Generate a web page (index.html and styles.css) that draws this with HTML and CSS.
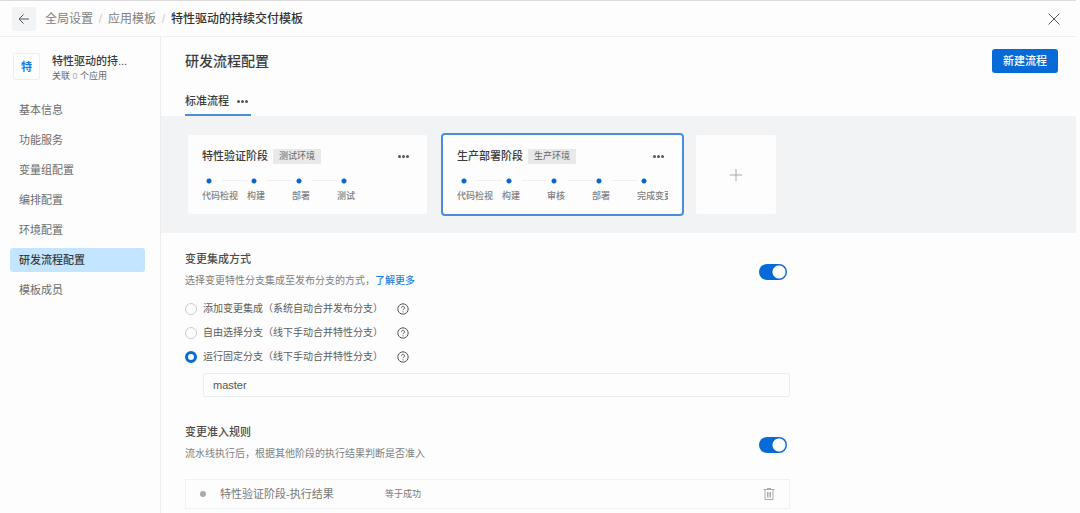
FILE: index.html
```html
<!DOCTYPE html>
<html lang="zh-CN">
<head>
<meta charset="utf-8">
<meta name="viewport" content="width=device-width, initial-scale=1">
<title>研发流程配置</title>
<link rel="stylesheet" href="styles.css">
</head>
<body>
<div class="app">
  <header class="topbar">
    <button class="back" aria-label="返回">
      <svg width="12" height="12" viewBox="0 0 12 12"><path d="M11 6H1.500M5.500 1.500L1 6l4.500 4.500"/></svg>
    </button>
    <nav class="crumbs">
      <a href="#">全局设置</a><span class="slash">/</span><a href="#">应用模板</a><span class="slash">/</span><strong>特性驱动的持续交付模板</strong>
    </nav>
    <button class="close" aria-label="关闭">
      <svg width="14" height="14" viewBox="0 0 14 14"><path d="M1.500 1.500l11 11M12.500 1.500l-11 11"/></svg>
    </button>
  </header>
  <div class="body">
    <aside class="sidebar">
      <div class="template">
        <span class="logo">特</span>
        <div class="template-text">
          <div class="template-name">特性驱动的持...</div>
          <div class="template-sub">关联 <span class="count">0</span> 个应用</div>
        </div>
      </div>
      <nav class="menu">
        <a href="#">基本信息</a>
        <a href="#">功能服务</a>
        <a href="#">变量组配置</a>
        <a href="#">编排配置</a>
        <a href="#">环境配置</a>
        <a href="#" class="active" aria-current="page">研发流程配置</a>
        <a href="#">模板成员</a>
      </nav>
    </aside>
    <main class="main">
      <div class="heading">
        <h1>研发流程配置</h1>
        <button class="primary">新建流程</button>
      </div>
      <div class="tabs">
        <div class="tab">
          <a href="#">标准流程</a>
          <button class="more" aria-label="更多"><i></i><i></i><i></i></button>
        </div>
      </div>
      <section class="stages">
        <article class="card">
          <div class="card-head">
            <h2>特性验证阶段</h2><span class="tag">测试环境</span>
            <button class="more" aria-label="更多"><i></i><i></i><i></i></button>
          </div>
          <ol class="steps">
            <li>代码检视</li><li>构建</li><li>部署</li><li>测试</li>
          </ol>
        </article>
        <article class="card selected">
          <div class="card-head">
            <h2>生产部署阶段</h2><span class="tag">生产环境</span>
            <button class="more" aria-label="更多"><i></i><i></i><i></i></button>
          </div>
          <ol class="steps">
            <li>代码检视</li><li>构建</li><li>审核</li><li>部署</li><li>完成变更</li>
          </ol>
        </article>
        <button class="add" aria-label="添加阶段">
          <svg width="12" height="12" viewBox="0 0 12 12"><path d="M6 0v12M0 6h12"/></svg>
        </button>
      </section>
      <div class="settings">
        <section>
          <div class="setting-head">
            <div>
              <h3>变更集成方式</h3>
              <p>选择变更特性分支集成至发布分支的方式，<a href="#">了解更多</a></p>
            </div>
            <input class="switch" type="checkbox" role="switch" aria-label="变更集成方式" checked>
          </div>
          <div class="options">
            <div class="option">
              <input type="radio" name="mode" id="mode-add"><label for="mode-add">添加变更集成（系统自动合并发布分支）</label>
              <svg class="help" width="12" height="12" viewBox="0 0 12 12"><circle cx="6" cy="6" r="5.200"/><path d="M4.500 4.800a1.500 1.500 0 1 1 2.300 1.250Q6 6.500 6 7.200M6 8.300v1"/></svg>
            </div>
            <div class="option">
              <input type="radio" name="mode" id="mode-free"><label for="mode-free">自由选择分支（线下手动合并特性分支）</label>
              <svg class="help" width="12" height="12" viewBox="0 0 12 12"><circle cx="6" cy="6" r="5.200"/><path d="M4.500 4.800a1.500 1.500 0 1 1 2.300 1.250Q6 6.500 6 7.200M6 8.300v1"/></svg>
            </div>
            <div class="option">
              <input type="radio" name="mode" id="mode-fixed" checked><label for="mode-fixed">运行固定分支（线下手动合并特性分支）</label>
              <svg class="help" width="12" height="12" viewBox="0 0 12 12"><circle cx="6" cy="6" r="5.200"/><path d="M4.500 4.800a1.500 1.500 0 1 1 2.300 1.250Q6 6.500 6 7.200M6 8.300v1"/></svg>
            </div>
            <input class="branch" type="text" value="master" aria-label="固定分支">
          </div>
        </section>
        <section>
          <div class="setting-head">
            <div>
              <h3>变更准入规则</h3>
              <p>流水线执行后，根据其他阶段的执行结果判断是否准入</p>
            </div>
            <input class="switch" type="checkbox" role="switch" aria-label="变更准入规则" checked>
          </div>
          <div class="rule">
            <span class="bullet"></span>
            <span class="rule-name">特性验证阶段-执行结果</span>
            <span class="rule-cond">等于成功</span>
            <button class="trash" aria-label="删除">
              <svg width="12" height="12" viewBox="0 0 12 12"><path d="M0.500 1.500h11M4 0.500h4M2 1.500v10h8v-10M4.500 4V9.500M6 4V9.500M7.500 4V9.500"/></svg>
            </button>
          </div>
        </section>
      </div>
    </main>
  </div>
</div>
</body>
</html>
```
FILE: styles.css
```css
* { box-sizing: border-box; }
body {
  margin: 0;
  background: #fdfdfd;
  color: #3c3c3c;
  font: 11px/16px "Liberation Sans", "Noto Sans CJK SC", sans-serif;
}
h1, h2, h3, p, ol { margin: 0; padding: 0; font-weight: 500; }
a { color: inherit; text-decoration: none; }
button { border: 0; padding: 0; background: none; font: inherit; color: inherit; cursor: pointer; }
svg { display: block; fill: none; stroke: currentColor; }

.app { display: flex; flex-direction: column; height: 100vh; overflow: hidden; margin-right: 4px; border-top: 1px solid #dcdcdc; }
.topbar { flex: none; display: flex; align-items: center; height: 36px; padding: 0 15px 0 12px; border-bottom: 1px solid #efefef; }
.back { display: grid; place-items: center; width: 24px; height: 24px; border-radius: 3px; background: #f1f3f4; color: #555; }
.crumbs { display: flex; flex: 1; margin-left: 9px; font-size: 12px; color: #808080; }
.slash { width: 15px; text-align: center; color: #ccc; }
.crumbs strong { font-weight: 500; color: #333; }
.close { color: #555; }

.body { flex: 1; display: flex; min-height: 0; }
.sidebar { flex: none; width: 161px; padding: 16px 15px 0 10px; border-right: 1px solid #ededed; }
.template { display: flex; gap: 12px; padding-left: 3px; }
.logo { display: grid; place-items: center; width: 27px; height: 27px; border: 1px solid #eee; border-radius: 2px; color: #1677dc; font-weight: 700; }
.template-name { font-weight: 500; line-height: 16px; white-space: nowrap; }
.template-sub { font-size: 9px; line-height: 14px; color: #666; }
.count { color: #aaa; }
.menu { display: grid; gap: 6px; margin-top: 15px; }
.menu a { padding: 4px 9px; border-radius: 3px; color: #6c6c6c; }
.menu .active { background: #c4e5ff; color: #3c3c3c; font-weight: 500; }

.main { flex: 1; min-width: 0; }
.heading { display: flex; justify-content: space-between; align-items: center; padding: 12px 18px 0 24px; }
h1 { font-size: 14px; line-height: 20px; }
.primary { height: 24px; padding: 0 11px; border-radius: 3px; background: #066bd6; color: #fff; font-weight: 500; }
.tabs { display: flex; padding: 20px 24px 0; }
.tab { display: flex; gap: 8px; height: 23px; border-bottom: 2px solid #4a8ddc; font-weight: 500; padding-right: 3px; }
.more { display: flex; align-items: center; gap: 1px; height: 16px; }
.more i { width: 3px; height: 3px; border-radius: 50%; background: #555; }

.stages { display: flex; align-items: center; gap: 12px; padding: 17px 25px; background: #f1f3f5; }
.card { width: 243px; height: 83px; padding: 13px 14px 0; border: 2px solid #f1f3f5; border-radius: 4px; background: #fdfdfd; }
.selected { border-color: #4a8ddc; }
.card-head { display: flex; align-items: center; }
h2 { font-size: 11px; }
.tag { margin-left: 5px; padding: 0 6px; font-size: 9px; line-height: 15px; background: #e9e9e9; color: #666; }
.card-head .more { margin-left: auto; margin-right: 4px; }
.steps { display: grid; grid-template-columns: repeat(5, 45px); margin-top: 14px; list-style: none; font-size: 9px; line-height: 14px; color: #808080; width: 211px; overflow: hidden; white-space: nowrap; }
.steps li::before { content: ""; display: block; height: 6px; margin: 0 0 5px 4px; background: radial-gradient(circle at 3px 3px, #0867cd 2px, transparent 3px), linear-gradient(#eee, #eee) 16px 2px / 26px 1px no-repeat; }
.steps li:last-child::before { width: 6px; }
.add { display: grid; place-items: center; width: 80px; height: 79px; background: #fdfdfd; color: #aaa; border-radius: 2px; }

.settings { display: grid; gap: 27px; max-width: 629px; padding: 18px 0 0 24px; }
.setting-head { display: flex; justify-content: space-between; align-items: center; padding-right: 3px; }
h3 { font-size: 11px; color: #4c4c4c; }
p { margin-top: 6px; font-size: 10px; font-weight: 400; color: #808080; }
p a { color: #1d7fe6; font-weight: 500; }
.switch { appearance: none; width: 28px; height: 16px; margin: 3px 0 0; border-radius: 8px; background: radial-gradient(circle at 20px 8px, #fff 6px, transparent 7px), #066bd6; }
.options { display: grid; gap: 8px; margin-top: 12px; }
.option { display: flex; align-items: center; font-size: 10px; color: #5c5c5c; }
.option input { appearance: none; width: 12px; height: 12px; margin: 0 6px 0 0; border: 1px solid #ccc; border-radius: 50%; }
.option input:checked { border: 3px solid #066bd6; }
.help { margin-left: 14px; color: #555; }
.branch { height: 24px; margin-left: 18px; padding: 0 9px; border: 1px solid #ebedef; border-radius: 2px; background: transparent; font: inherit; color: #555; }
.rule { display: flex; align-items: center; height: 30px; margin-top: 17px; padding: 0 14px; border: 1px solid #f0f1f2; color: #777; }
.bullet { width: 6px; height: 6px; border-radius: 50%; background: #aaa; }
.rule-name { width: 165px; margin-left: 14px; }
.rule-cond { font-size: 9px; }
.trash { margin-left: auto; color: #aaa; }
```
